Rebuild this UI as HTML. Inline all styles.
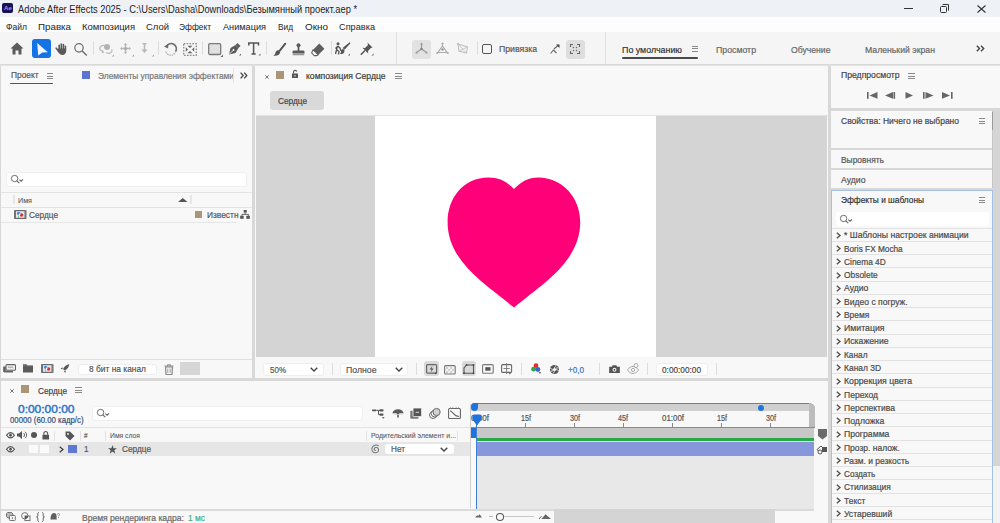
<!DOCTYPE html><html><head><meta charset="utf-8">
<style>
*{margin:0;padding:0;box-sizing:border-box}
html,body{width:1000px;height:523px;overflow:hidden;background:#d8d8d8;font-family:"Liberation Sans",sans-serif;color:#4a4a4a}
.a{position:absolute}
.t,.f{position:absolute;white-space:nowrap;line-height:1;transform-origin:0 0;-webkit-text-stroke-width:0.2px}
svg{position:absolute;overflow:visible}
.sep{position:absolute;width:1px;background:#dedede}
.hm{position:absolute;width:7px;height:6px;border-top:1px solid #8a8a8a;border-bottom:1px solid #8a8a8a}
.hm:after{content:"";position:absolute;left:0;right:0;top:1.5px;height:1px;background:#8a8a8a}
.dd{position:absolute;background:#fff;border-radius:3px}
.rowsep{position:absolute;height:1px;background:#e2e2e2}
</style></head><body>
<!-- title bar -->
<div class="a" style="left:0;top:0;width:1000px;height:17px;background:#eef2f7"></div>
<div class="a" style="left:2px;top:3px;width:10.5px;height:10px;background:#1c1150;border-radius:2px"></div>
<div class="t" style="left:4px;top:5px;font-size:6.2px;color:#9d92ff;font-weight:bold;-webkit-text-stroke-width:0">Ae</div>
<div class="f" style="left: 18px; top: 3.5px; font-size: 10.5px; color: rgb(30, 30, 30); width: 381.9px; -webkit-text-stroke-width: 0px; transform: scaleX(0.888);">Adobe After Effects 2025 - C:\Users\Dasha\Downloads\Безымянный проект.aep *</div>
<div class="a" style="left:904px;top:8px;width:9px;height:1px;background:#333"></div>
<div class="a" style="left:940px;top:6px;width:7px;height:7px;border:1.2px solid #333;border-radius:1.5px"></div>
<div class="a" style="left:942px;top:4px;width:7px;height:7px;border-top:1.2px solid #333;border-right:1.2px solid #333;border-radius:1.5px"></div>
<svg style="left:977px;top:5px" width="9" height="8"><path d="M0.5 0.5L8.5 7.5M8.5 0.5L0.5 7.5" stroke="#333" stroke-width="1.1"></path></svg>
<!-- menu bar -->
<div class="a" style="left:0;top:17px;width:1000px;height:15px;background:#fdfdfd"></div>
<div class="f" style="left: 6px; top: 21.5px; font-size: 9.5px; color: rgb(38, 38, 38); -webkit-text-stroke-width: 0px; width: 23.4px; transform: scaleX(0.899);">Файл</div>
<div class="f" style="left: 38px; top: 21.5px; font-size: 9.5px; color: rgb(38, 38, 38); -webkit-text-stroke-width: 0px; width: 32.1px; transform: scaleX(1.028);">Правка</div>
<div class="f" style="left: 82px; top: 21.5px; font-size: 9.5px; color: rgb(38, 38, 38); -webkit-text-stroke-width: 0px; width: 53.2px; transform: scaleX(0.996);">Композиция</div>
<div class="f" style="left: 146px; top: 21.5px; font-size: 9.5px; color: rgb(38, 38, 38); -webkit-text-stroke-width: 0px; width: 23.1px; transform: scaleX(0.995);">Слой</div>
<div class="f" style="left: 179px; top: 21.5px; font-size: 9.5px; color: rgb(38, 38, 38); -webkit-text-stroke-width: 0px; width: 36.4px; transform: scaleX(0.88);">Эффект</div>
<div class="f" style="left: 223px; top: 21.5px; font-size: 9.5px; color: rgb(38, 38, 38); -webkit-text-stroke-width: 0px; width: 44.6px; transform: scaleX(0.964);">Анимация</div>
<div class="f" style="left: 278px; top: 21.5px; font-size: 9.5px; color: rgb(38, 38, 38); -webkit-text-stroke-width: 0px; width: 17.2px; transform: scaleX(0.873);">Вид</div>
<div class="f" style="left: 305px; top: 21.5px; font-size: 9.5px; color: rgb(38, 38, 38); -webkit-text-stroke-width: 0px; width: 22.1px; transform: scaleX(1.042);">Окно</div>
<div class="f" style="left: 339px; top: 21.5px; font-size: 9.5px; color: rgb(38, 38, 38); -webkit-text-stroke-width: 0px; width: 37.3px; transform: scaleX(0.966);">Справка</div>
<!-- toolbar -->
<div class="a" style="left:0;top:32px;width:1000px;height:32px;background:#f5f5f5"></div>
<div class="a" style="left:0;top:64px;width:1000px;height:1px;background:#d9d9d9"></div>
<!-- TOOLS -->
<!-- home -->
<svg style="left:10px;top:42px" width="14" height="13" viewBox="0 0 14 13"><path d="M7 0.5L0.5 6.5H2.5V12.5H5.5V8.5H8.5V12.5H11.5V6.5H13.5Z" fill="#5c5c5c"></path></svg>
<!-- select -->
<div class="a" style="left:32px;top:39.3px;width:19px;height:18.7px;background:#1473e6;border-radius:3px"></div>
<svg style="left:37px;top:42.8px" width="11" height="13" viewBox="0 0 11 13"><path d="M0.2 0L10.8 9.3L5.3 9.4L1.2 12.6Z" fill="#eef6ff"></path></svg>
<!-- hand -->
<svg style="left:55px;top:43px" width="13" height="12" viewBox="0 0 13 12"><g stroke="#5a5a5a" stroke-linecap="round" fill="none"><path d="M4.2 6.5V2.2" stroke-width="1.6"></path><path d="M6.3 6V1" stroke-width="1.6"></path><path d="M8.4 6V1.6" stroke-width="1.6"></path><path d="M10.4 6.5V3.2" stroke-width="1.5"></path><path d="M1.2 5.2L3.5 8" stroke-width="1.6"></path></g><path d="M3.3 5.5H11.2V8C11.2 10.3 9.6 12 7.4 12C5.6 12 4.6 11 3.4 9.5L2.4 8Z" fill="#5a5a5a"></path></svg>
<!-- zoom -->
<svg style="left:74px;top:42.5px" width="14" height="13" viewBox="0 0 14 13"><circle cx="5" cy="4.8" r="4.2" fill="none" stroke="#707070" stroke-width="1.25"></circle><path d="M8 7.8L12.8 12.5" stroke="#707070" stroke-width="1.5"></path></svg>
<div class="sep" style="left:93px;top:41px;height:14px"></div>
<!-- rotobrush gray -->
<svg style="left:99px;top:43px" width="16" height="14" viewBox="0 0 16 14"><path d="M5.5 2.5C3 2.2 0.8 3.5 0.8 5.5C0.8 7.3 2.6 8.3 4.5 8.2M7 9.5C8 10.3 10 10.5 11.5 9.8C13 9 13.5 7.5 12.5 6.5" fill="none" stroke="#bdbdbd" stroke-width="1.3"></path><circle cx="8" cy="4" r="3" fill="#b3b3b3"></circle><path d="M3 7.5L2.8 10.2L5.5 9.2Z" fill="#b5b5b5"></path><path d="M13 13.5L15 13.5L15 11.5Z" fill="#9a9a9a"></path></svg>
<!-- puppet + -->
<svg style="left:120px;top:43px" width="15" height="14" viewBox="0 0 15 14"><path d="M5.5 1.5V9.5M1.5 5.5H9.5" stroke="#b8b8b8" stroke-width="1.5"></path><path d="M5.5 0L7.3 2H3.7ZM5.5 11L7.3 9H3.7ZM0 5.5L2 3.7V7.3ZM11 5.5L9 3.7V7.3Z" fill="#b8b8b8"></path><circle cx="5.5" cy="5.5" r="1.6" fill="#aaa"></circle><path d="M12 13.5L14 13.5L14 11.5Z" fill="#9a9a9a"></path></svg>
<!-- pin arrow -->
<svg style="left:141px;top:43px" width="14" height="14" viewBox="0 0 14 14"><path d="M1.5 0.8H5.5M3.5 0.8V7" stroke="#b8b8b8" stroke-width="1.5"></path><path d="M0.3 6.5H6.7L3.5 10Z" fill="#b8b8b8"></path><path d="M11 13.5L13 13.5L13 11.5Z" fill="#9a9a9a"></path></svg>
<div class="sep" style="left:158px;top:41px;height:14px"></div>
<!-- rotate -->
<svg style="left:164px;top:42.5px" width="13" height="13" viewBox="0 0 13 13"><path d="M2.6 3.3A5.2 5.2 0 1 1 11.6 8.5" fill="none" stroke="#6e6e6e" stroke-width="1.5"></path><path d="M11.6 8.5A5.2 5.2 0 0 1 1.5 8" fill="none" stroke="#a5a5a5" stroke-width="1.4" stroke-dasharray="1.1 1.1"></path><path d="M0 3.4L4.4 0.9L4.1 5.4Z" fill="#6a6a6a"></path></svg>
<!-- pan behind -->
<svg style="left:183px;top:42.5px" width="14" height="13" viewBox="0 0 14 13"><rect x="0.7" y="0.7" width="12.6" height="11.6" fill="none" stroke="#8a8a8a" stroke-width="1.3" stroke-dasharray="1.6 1.3"></rect><path d="M4.5 2.8H9.5L7 5ZM4.5 10.2H9.5L7 8ZM2.8 4.3V8.7L5 6.5ZM11.2 4.3V8.7L9 6.5Z" fill="#666"></path></svg>
<div class="sep" style="left:202px;top:41px;height:14px"></div>
<!-- rect -->
<svg style="left:208px;top:43px" width="16" height="15" viewBox="0 0 16 15"><rect x="0.7" y="0.7" width="12" height="10.8" rx="1.2" fill="#e0e0e0" stroke="#7a7a7a" stroke-width="1.3"></rect><path d="M12.5 14L15 14L15 11.5Z" fill="#666"></path></svg>
<!-- pen -->
<svg style="left:228px;top:42px" width="14" height="14" viewBox="0 0 14 14"><path d="M1 12.5L2.5 6L7.5 3L10.5 6L7.5 11Z" fill="#5a5a5a"></path><path d="M7.5 3L9.5 1L12.5 4L10.5 6" fill="#5a5a5a"></path><path d="M1 12.5L5 8.5" stroke="#f5f5f5" stroke-width="0.9"></path><circle cx="5.5" cy="8" r="1" fill="#f5f5f5"></circle><path d="M11 13.5L13 13.5L13 11.5Z" fill="#666"></path></svg>
<!-- T -->
<svg style="left:248px;top:42px" width="13" height="14" viewBox="0 0 13 14"><path d="M0.8 3.5V1H10.5V3.5M5.6 1V12M3.5 12H7.7" fill="none" stroke="#555" stroke-width="1.5"></path><path d="M10.5 13.5L12.5 13.5L12.5 11.5Z" fill="#666"></path></svg>
<div class="sep" style="left:266px;top:41px;height:14px"></div>
<!-- brush -->
<svg style="left:272.5px;top:42.5px" width="13" height="13" viewBox="0 0 13 13"><path d="M12.3 0.7L6.8 7.6" stroke="#555" stroke-width="2" stroke-linecap="round"></path><path d="M5.5 7C3.3 7.2 2.5 8.8 2.3 10.2C2.1 11.5 1.2 12.2 0.3 12.6C3 13.2 6.8 12.5 7.2 9Z" fill="#555"></path></svg>
<!-- stamp -->
<svg style="left:291.5px;top:42.5px" width="13" height="13" viewBox="0 0 13 13"><circle cx="6.5" cy="2.3" r="2" fill="#5a5a5a"></circle><path d="M6.5 3.5V8" stroke="#5a5a5a" stroke-width="1.8"></path><path d="M0.5 8.8Q0.5 7.6 2 7.6H11Q12.5 7.6 12.5 8.8V10.5H0.5Z" fill="#5a5a5a"></path><rect x="0.8" y="10.5" width="11.4" height="1.8" fill="#9a9a9a"></rect></svg>
<!-- eraser -->
<svg style="left:311px;top:42.5px" width="14" height="13" viewBox="0 0 14 13"><path d="M8.3 0.6L13.4 5.7L7.2 11.9L2.1 6.8Z" fill="#5e5e5e"></path><path d="M4.2 8.9L7.2 11.9L5.6 12.6H3.3L0.8 10.2L0.9 9.2L2.1 6.8Z" fill="#fff" stroke="#5e5e5e" stroke-width="1.1" stroke-linejoin="round"></path></svg>
<div class="sep" style="left:331px;top:41px;height:14px"></div>
<!-- roto brush -->
<svg style="left:335px;top:42px" width="16" height="14" viewBox="0 0 16 14"><circle cx="3" cy="1.8" r="1.5" fill="#555"></circle><path d="M2.5 4L1.5 8L0.5 12M2.5 4L5 6L6 9M2 8L4 9.5L3.5 12.5M2.5 4.5L0.5 6.5" fill="none" stroke="#555" stroke-width="1.3"></path><path d="M15 0.8L9.5 7L8.5 6Z" fill="#555" stroke="#555" stroke-width="1.2"></path><path d="M8.2 7C6.5 7 6 8.5 6 10C6 11.3 5 11.7 4.5 12C7 12.5 9.5 11.5 9.5 8.5Z" fill="#555"></path><path d="M13 13.5L15 13.5L15 11.5Z" fill="#666"></path></svg>
<!-- pin -->
<svg style="left:360px;top:42px" width="14" height="14" viewBox="0 0 14 14"><path d="M7.5 0.5L12.5 5.5L10.8 6L8 9L8.2 11.5L2.5 5.8L5 6L8 3Z" fill="#555"></path><path d="M5 8.5L0.8 12.7" stroke="#555" stroke-width="1.5"></path><path d="M11.5 13.5L13.5 13.5L13.5 11.5Z" fill="#666"></path></svg>
<div class="sep" style="left:396px;top:32px;height:32px;background:#e0e0e0"></div>
<!-- axis btns -->
<div class="a" style="left:412px;top:39.5px;width:19px;height:19px;background:#e2e2e2;border-radius:3px"></div>
<svg style="left:415px;top:42px" width="13" height="13" viewBox="0 0 13 13"><path d="M6.5 7V1.5M6.5 7L1.5 10.5M6.5 7L11.5 10.5" stroke="#9a9a9a" stroke-width="1.2" fill="none"></path><path d="M5 2.5L6.5 0.5L8 2.5Z" fill="#9a9a9a"></path><circle cx="6.5" cy="7" r="1.3" fill="#888"></circle><circle cx="1.5" cy="10.8" r="1" fill="#999"></circle><circle cx="11.5" cy="10.8" r="1" fill="#999"></circle></svg>
<svg style="left:436px;top:42px" width="13" height="13" viewBox="0 0 13 13"><path d="M6.5 3.5V1M6.5 4L2 10.5H11Z" stroke="#aaa" stroke-width="1.2" fill="none"></path><path d="M5 2L6.5 0.2L8 2Z" fill="#aaa"></path><circle cx="6.5" cy="7.5" r="1.2" fill="#999"></circle><circle cx="1.2" cy="11" r="1" fill="#aaa"></circle><circle cx="11.8" cy="11" r="1" fill="#aaa"></circle></svg>
<svg style="left:457px;top:42px" width="12" height="13" viewBox="0 0 12 13"><path d="M1 2L10.5 5L9.5 11L2 9Z" stroke="#c0c0c0" stroke-width="1.1" fill="none"></path><path d="M1 2L9.5 11M10.5 5L2 9" stroke="#c8c8c8" stroke-width="1" fill="none"></path><circle cx="1" cy="2" r="1" fill="#bbb"></circle></svg>
<div class="sep" style="left:477px;top:41px;height:14px"></div>
<div class="a" style="left:481.5px;top:43.5px;width:10.5px;height:10.5px;border:1.6px solid #555;border-radius:2px"></div>
<div class="f" style="left: 499px; top: 44px; font-size: 9.5px; color: rgb(85, 85, 85); width: 41.5px; transform: scaleX(0.915);">Привязка</div>
<svg style="left:550px;top:44px" width="10" height="10" viewBox="0 0 10 10"><path d="M0.5 9.5L3.5 6L6.5 9M4 5L8.5 1" stroke="#666" stroke-width="1.1" fill="none"></path><path d="M6 0.5H9.5V4Z" fill="#444"></path></svg>
<div class="a" style="left:565.5px;top:39.5px;width:19px;height:19px;background:#dedede;border-radius:3px"></div>
<svg style="left:570px;top:44px" width="10" height="10" viewBox="0 0 10 10"><path d="M0.5 3V0.5H3M7 0.5H9.5V3M9.5 7V9.5H7M3 9.5H0.5V7" stroke="#666" stroke-width="1.1" fill="none"></path><circle cx="3.5" cy="3.5" r="0.7" fill="#666"></circle><circle cx="6.5" cy="3.5" r="0.7" fill="#666"></circle><circle cx="3.5" cy="6.5" r="0.7" fill="#666"></circle><circle cx="6.5" cy="6.5" r="0.7" fill="#666"></circle></svg>
<div class="sep" style="left:605px;top:32px;height:32px;background:#e0e0e0"></div>
<div class="f" style="left: 622px; top: 44.8px; font-size: 9.5px; color: rgb(51, 51, 51); width: 64.3px; transform: scaleX(0.934);">По умолчанию</div>
<div class="hm" style="left:692px;top:45.5px;width:6px"></div>
<div class="a" style="left:622px;top:57px;width:76px;height:2px;background:#4a4a4a;border-radius:1px"></div>
<div class="f" style="left: 716px; top: 44.8px; font-size: 9.5px; color: rgb(102, 102, 102); width: 43.4px; transform: scaleX(0.922);">Просмотр</div>
<div class="f" style="left: 790.5px; top: 44.8px; font-size: 9.5px; color: rgb(102, 102, 102); width: 43.5px; transform: scaleX(0.909);">Обучение</div>
<div class="f" style="left: 865px; top: 44.8px; font-size: 9.5px; color: rgb(102, 102, 102); width: 76.6px; transform: scaleX(0.914);">Маленький экран</div>
<svg style="left:976px;top:45px" width="9" height="7" viewBox="0 0 9 7"><path d="M0.8 0.8L3.5 3.5L0.8 6.2M5 0.8L7.7 3.5L5 6.2" stroke="#444" stroke-width="1.4" fill="none"></path></svg>

<!-- PANELS -->
<!-- ===== PROJECT PANEL ===== -->
<div class="a" style="left:1px;top:65px;width:251px;height:313px;background:#f8f8f8"></div>
<div class="f" style="left: 11px; top: 70.4px; font-size: 9.5px; color: rgb(85, 85, 85); width: 31.3px; transform: scaleX(0.879);">Проект</div>
<div class="hm" style="left:47px;top:73px;width:6px"></div>
<div class="a" style="left:10px;top:83px;width:43px;height:1.4px;background:#555;border-radius:1px"></div>
<div class="a" style="left:82px;top:71px;width:8px;height:7.5px;background:#5b75d3"></div>
<div class="f" style="left: 97.5px; top: 71px; font-size: 9.5px; color: rgb(119, 119, 119); width: 154.1px; transform: scaleX(0.883);">Элементы управления эффектами</div>
<div class="a" style="left:233px;top:68px;width:1px;height:15px;background:#e6e6e6"></div>
<svg style="left:240px;top:72.3px" width="8" height="7" viewBox="0 0 8 7"><path d="M0.6 0.6L3.2 3.5L0.6 6.4M4.2 0.6L6.8 3.5L4.2 6.4" stroke="#444" stroke-width="1.3" fill="none"></path></svg>
<!-- search -->
<div class="dd" style="left:6px;top:171.5px;width:241px;height:15px;border:1px solid #efefef"></div>
<svg style="left:11px;top:175px" width="13" height="9" viewBox="0 0 13 9"><circle cx="3.6" cy="3.5" r="3.2" fill="none" stroke="#666" stroke-width="0.95"></circle><path d="M5.9 5.9L8.3 8.2" stroke="#666" stroke-width="1.1"></path><path d="M8.3 4.6L10.1 6.2L12 4.3" stroke="#666" stroke-width="1.1" fill="none"></path></svg>
<div class="a" style="left:1px;top:191.5px;width:251px;height:1px;background:#e3e3e3"></div>
<div class="a" style="left:13px;top:195px;width:1.5px;height:9px;background:#e6e6e6"></div>
<div class="f" style="left: 18px; top: 197.3px; font-size: 8px; color: rgb(90, 90, 90); -webkit-text-stroke-width: 0.1px; width: 15.6px; transform: scaleX(0.898);">Имя</div>
<svg style="left:177.5px;top:197.9px" width="9.5" height="4" viewBox="0 0 9.5 4"><path d="M0 4L4.75 0L9.5 4Z" fill="#555"></path></svg>
<div class="a" style="left:190px;top:195px;width:1.5px;height:9px;background:#e6e6e6"></div>
<div class="a" style="left:1px;top:206.5px;width:251px;height:1px;background:#e3e3e3"></div>
<!-- comp icon -->
<svg style="left:14px;top:209.5px" width="12.5" height="9" viewBox="0 0 12.5 9"><rect x="0" y="0" width="12.5" height="9" rx="0.8" fill="#6a6a6a"></rect><path d="M1 0.4V8.6M11.5 0.4V8.6" stroke="#aaa" stroke-width="0.6" stroke-dasharray="0.8 0.9"></path><rect x="2" y="1.2" width="8.5" height="6.6" fill="#e6e6e6"></rect><circle cx="4.6" cy="3.3" r="1.6" fill="#3f86d8"></circle><circle cx="7.6" cy="5" r="1.7" fill="#d8303a"></circle><circle cx="5.6" cy="4.4" r="0.8" fill="#fff"></circle><rect x="4.2" y="5.6" width="0.8" height="2" fill="#5cbf6a"></rect></svg>
<div class="f" style="left: 29px; top: 210.3px; font-size: 9.5px; color: rgb(85, 85, 85); width: 33.4px; transform: scaleX(0.869);">Сердце</div>
<div class="a" style="left:195px;top:211px;width:7px;height:7px;background:#a89676"></div>
<div class="f" style="left: 207px; top: 210.3px; font-size: 9.5px; color: rgb(85, 85, 85); width: 35.8px; transform: scaleX(0.881);">Известн</div>
<svg style="left:240px;top:209.8px" width="10" height="8.8" viewBox="0 0 11 10"><rect x="4" y="0" width="3.5" height="3" fill="#555"></rect><path d="M5.7 3V5M2 5H9.5M2 5V6.5M9.5 5V6.5" stroke="#555" stroke-width="1"></path><rect x="0" y="6.5" width="4" height="3.5" fill="#555"></rect><rect x="7" y="6.5" width="4" height="3.5" fill="#555"></rect></svg>
<div class="a" style="left:1px;top:221.5px;width:236px;height:1px;background:#e6e6e6"></div>
<!-- bottom toolbar -->
<div class="a" style="left:1px;top:359px;width:251px;height:1px;background:#e0e0e0"></div>
<svg style="left:2.5px;top:364px" width="13" height="8.5" viewBox="0 0 13 8.5"><rect x="3" y="0.6" width="9.5" height="5.6" rx="1" fill="#eee" stroke="#666" stroke-width="1.1"></rect><path d="M5 3.2H10" stroke="#888" stroke-width="0.8"></path><rect x="0.2" y="2.5" width="2.5" height="5.5" fill="#5e5e5e"></rect><rect x="1" y="6.8" width="9" height="1.7" fill="#666"></rect></svg>
<svg style="left:23px;top:364px" width="10" height="8.5" viewBox="0 0 10 8.5"><path d="M0 0.3H3.5L4.3 1.4H10V8.5H0Z" fill="#5a5a5a"></path><path d="M0 1.8H10" stroke="#888" stroke-width="0.5"></path></svg>
<svg style="left:40.5px;top:363.8px" width="12.5" height="9" viewBox="0 0 12.5 9"><rect x="0" y="0" width="12.5" height="9" rx="0.8" fill="#6a6a6a"></rect><path d="M1 0.4V8.6M11.5 0.4V8.6" stroke="#aaa" stroke-width="0.6" stroke-dasharray="0.8 0.9"></path><rect x="2" y="1.2" width="8.5" height="6.6" fill="#e6e6e6"></rect><circle cx="4.6" cy="3.3" r="1.6" fill="#3f86d8"></circle><circle cx="7.6" cy="5" r="1.7" fill="#d8303a"></circle><circle cx="5.6" cy="4.4" r="0.8" fill="#fff"></circle><rect x="4.2" y="5.6" width="0.8" height="2" fill="#5cbf6a"></rect></svg>
<svg style="left:60px;top:363.5px" width="9.5" height="9.5" viewBox="0 0 10 10"><path d="M9.8 0.2C7 0.5 4.5 2.3 3.2 5.3L4.7 6.8C7.7 5.5 9.5 3 9.8 0.2Z" fill="#5a5a5a"></path><path d="M3.2 3.6L0.6 4.6L2.3 5.8ZM6.4 6.8L5.4 9.4L4.2 7.7Z" fill="#5a5a5a"></path></svg>
<div class="dd" style="left:78px;top:364px;width:79px;height:11px;border:1px solid #eee"></div>
<div class="f" style="left: 88.5px; top: 365px; font-size: 9px; color: rgb(85, 85, 85); width: 61.2px; transform: scaleX(0.932);">8 бит на канал</div>
<svg style="left:164px;top:363.5px" width="10" height="11" viewBox="0 0 10 11"><path d="M0.5 2H9.5M3.5 2V0.8H6.5V2" stroke="#888" stroke-width="1" fill="none"></path><path d="M1.5 3H8.5L8 10.5H2Z" fill="none" stroke="#888" stroke-width="1.2"></path><path d="M3.8 4.5V9M6.2 4.5V9" stroke="#888" stroke-width="0.8"></path></svg>
<div class="a" style="left:180px;top:362px;width:19.5px;height:12.5px;background:#d6d6d6"></div>

<!-- ===== COMP PANEL ===== -->
<div class="a" style="left:255px;top:65px;width:573px;height:313px;background:#f8f8f8"></div>
<svg style="left:264.5px;top:74.5px" width="4" height="4" viewBox="0 0 4 4"><path d="M0.3 0.3L3.7 3.7M3.7 0.3L0.3 3.7" stroke="#666" stroke-width="0.9"></path></svg>
<div class="a" style="left:276px;top:71px;width:8px;height:7.5px;background:#a89676"></div>
<svg style="left:292px;top:70px" width="6" height="8" viewBox="0 0 6 8"><path d="M1.5 3.5V2A1.7 1.7 0 0 1 4.8 1.5" stroke="#555" stroke-width="1.1" fill="none"></path><rect x="0" y="3.5" width="6" height="4.5" fill="#555"></rect><rect x="2.5" y="5" width="1" height="1.5" fill="#f8f8f8"></rect></svg>
<div class="f" style="left: 306px; top: 71.3px; font-size: 9.5px; color: rgb(58, 58, 58); width: 88px; transform: scaleX(0.904);">композиция Сердце</div>
<div class="hm" style="left:395px;top:73px;width:6.5px"></div>
<div class="a" style="left:270px;top:91px;width:54px;height:19px;background:#d9d9d9;border-radius:3px"></div>
<div class="f" style="left: 277.5px; top: 95.6px; font-size: 9.5px; color: rgb(68, 68, 68); width: 33.4px; transform: scaleX(0.869);">Сердце</div>
<div class="a" style="left:256px;top:115px;width:572px;height:1px;background:#e4e4e4"></div>
<!-- viewer -->
<div class="a" style="left:256px;top:116px;width:571px;height:241px;background:#d4d4d4"></div>
<div class="a" style="left:375px;top:116px;width:281px;height:241px;background:#fff"></div>
<svg style="left:0;top:0" width="1000" height="523"><path d="M514 189C507 182 500 177.6 488.5 177.6C463.5 177.6 447.6 198 447.6 222C447.6 262 486 284 514 307.6C542 284 580.2 262 580.2 222C580.2 197 561.5 177.6 538.5 177.6C528 177.6 521 182 514 189Z" fill="#ff0078"></path></svg>
<!-- viewer toolbar -->
<div class="dd" style="left:263px;top:362.5px;width:61px;height:13.5px;border:1px solid #efefef"></div>
<div class="f" style="left: 270px; top: 365px; font-size: 9.5px; color: rgb(85, 85, 85); width: 19px; transform: scaleX(0.841);">50%</div>
<svg style="left:310px;top:366.5px" width="8" height="5" viewBox="0 0 8 5"><path d="M0.7 0.7L4 4L7.3 0.7" stroke="#444" stroke-width="1.4" fill="none"></path></svg>
<div class="sep" style="left:332px;top:363px;height:12px"></div>
<div class="dd" style="left:339.5px;top:362.5px;width:68.5px;height:13.5px;border:1px solid #efefef"></div>
<div class="f" style="left: 345.5px; top: 365px; font-size: 9.5px; color: rgb(85, 85, 85); width: 33.3px; transform: scaleX(0.917);">Полное</div>
<svg style="left:394.5px;top:366.5px" width="8" height="5" viewBox="0 0 8 5"><path d="M0.7 0.7L4 4L7.3 0.7" stroke="#444" stroke-width="1.4" fill="none"></path></svg>
<div class="sep" style="left:416px;top:363px;height:12px"></div>
<div class="a" style="left:424px;top:361px;width:14.5px;height:14.5px;background:#dadada;border-radius:3px"></div>
<svg style="left:425.5px;top:364px" width="12" height="11" viewBox="0 0 12 11"><rect x="0.6" y="0.6" width="10" height="8.6" rx="1" fill="none" stroke="#666" stroke-width="1.2"></rect><path d="M6.5 1.8L3.6 5.6H5.6L4.6 8.4L7.6 4.6H5.6Z" fill="#555"></path><path d="M8.2 8.8H11.2L9.7 10.3Z" fill="#444"></path></svg>
<svg style="left:444px;top:364.5px" width="12" height="10" viewBox="0 0 12 10"><rect x="0.6" y="0.6" width="10.6" height="8.4" rx="1" fill="#f2f2f2" stroke="#777" stroke-width="1.1"></rect><path d="M2 2H4V4H2ZM6 2H8V4H6ZM4 4H6V6H4ZM8 4H10V6H8ZM2 6H4V8H2ZM6 6H8V8H6Z" fill="#d0d0d0"></path></svg>
<div class="a" style="left:461.5px;top:361px;width:14px;height:14.5px;background:#dadada;border-radius:3px"></div>
<svg style="left:463px;top:364px" width="12" height="10" viewBox="0 0 12 10"><path d="M3.5 1H10.5V9.2H1V4Z" fill="none" stroke="#555" stroke-width="1.1"></path><circle cx="3.5" cy="1" r="0.9" fill="#444"></circle><circle cx="10.5" cy="1" r="0.9" fill="#444"></circle><circle cx="1" cy="9.2" r="0.9" fill="#444"></circle><circle cx="10.5" cy="9.2" r="0.9" fill="#444"></circle></svg>
<svg style="left:481.5px;top:364px" width="12" height="10" viewBox="0 0 12 10"><rect x="0.6" y="0.6" width="10.6" height="8.6" rx="1" fill="none" stroke="#777" stroke-width="1.1"></rect><rect x="3.3" y="3.2" width="5.2" height="3.5" fill="#555"></rect></svg>
<svg style="left:500.5px;top:362.5px" width="12" height="13" viewBox="0 0 12 13"><rect x="0.6" y="1.6" width="10" height="7.8" rx="1" fill="none" stroke="#666" stroke-width="1.1"></rect><path d="M5.6 0V11M2.5 5.5H8.7" stroke="#777" stroke-width="0.9"></path><path d="M7.5 10.2H10L8.75 11.6Z" fill="#444"></path></svg>
<div class="sep" style="left:521px;top:363px;height:12px"></div>
<svg style="left:530.5px;top:363px" width="11" height="12" viewBox="0 0 11 12"><circle cx="5" cy="2.7" r="2.4" fill="#e0312d"></circle><circle cx="2.6" cy="6.2" r="2.4" fill="#2da84a"></circle><circle cx="6.9" cy="6.5" r="2.4" fill="#3a62d8"></circle><path d="M7.5 9.3H10.3L8.9 10.8Z" fill="#444"></path></svg>
<svg style="left:550px;top:364.5px" width="9" height="9" viewBox="0 0 10 10"><circle cx="5" cy="5" r="5" fill="#555"></circle><circle cx="5" cy="5" r="1.8" fill="#f8f8f8"></circle><path d="M5 3.2L6.5 0.5M6.8 5L9.6 6.2M5 6.8L3.5 9.5M3.2 5L0.4 3.8M6.3 3.7L9.3 3M3.7 6.3L0.7 7" stroke="#f8f8f8" stroke-width="0.9"></path></svg>
<div class="f" style="left: 567.5px; top: 365px; font-size: 9.5px; color: rgb(45, 115, 201); width: 18.8px; transform: scaleX(0.853);">+0,0</div>
<div class="sep" style="left:599px;top:363px;height:12px"></div>
<svg style="left:608.5px;top:365px" width="11" height="8" viewBox="0 0 12 9"><path d="M0 2H3L4 0.3H8L9 2H12V9H0Z" fill="#555"></path><circle cx="6" cy="5.3" r="2.2" fill="#f8f8f8"></circle><circle cx="6" cy="5.3" r="1.1" fill="#555"></circle></svg>
<svg style="left:626.5px;top:363px" width="12" height="11" viewBox="0 0 12 11"><path d="M0.5 7C2 4.5 4 3.5 6 3.5C8 3.5 10 4.5 11.5 7C10 9.5 8 10.5 6 10.5C4 10.5 2 9.5 0.5 7Z" fill="none" stroke="#aaa" stroke-width="1"></path><circle cx="6" cy="7" r="1.6" fill="none" stroke="#aaa" stroke-width="1"></circle><circle cx="9" cy="2.5" r="2" fill="#f8f8f8" stroke="#aaa" stroke-width="1"></circle></svg>
<div class="sep" style="left:647px;top:363px;height:12px"></div>
<div class="dd" style="left:655.5px;top:362.5px;width:52.5px;height:13.5px;border:1px solid #efefef"></div>
<div class="f" style="left: 662px; top: 365px; font-size: 9.5px; color: rgb(68, 68, 68); width: 44.9px; transform: scaleX(0.868);">0:00:00:00</div>
<div class="sep" style="left:716px;top:363px;height:12px"></div>

<!-- PANELS2 -->
<!-- ===== TIMELINE ===== -->
<div class="a" style="left:1px;top:381px;width:827px;height:142px;background:#f8f8f8"></div>
<svg style="left:10px;top:388.5px" width="4" height="4" viewBox="0 0 4 4"><path d="M0.3 0.3L3.7 3.7M3.7 0.3L0.3 3.7" stroke="#666" stroke-width="0.9"></path></svg>
<div class="a" style="left:21px;top:384.5px;width:8px;height:8px;background:#a89676"></div>
<div class="f" style="left: 38px; top: 385.5px; font-size: 9.5px; color: rgb(68, 68, 68); width: 33.4px; transform: scaleX(0.869);">Сердце</div>
<div class="hm" style="left:75px;top:387px;width:6.5px"></div>
<div class="f" style="left: 18px; top: 404px; font-size: 10.8px; color: rgb(47, 116, 200); width: 51px; -webkit-text-stroke: 0.45px rgb(47, 116, 200); transform: scaleX(1.107);">0:00:00:00</div>
<div class="f" style="left: 9.5px; top: 415.9px; font-size: 9px; color: rgb(46, 77, 124); width: 85px; -webkit-text-stroke: 0.2px rgb(46, 77, 124); transform: scaleX(0.865);">00000 (60.00 кадр/с)</div>
<div class="dd" style="left:92px;top:405.5px;width:271px;height:15px;border:1px solid #efefef"></div>
<svg style="left:97px;top:409px" width="13" height="9" viewBox="0 0 13 9"><circle cx="3.6" cy="3.5" r="3.2" fill="none" stroke="#666" stroke-width="0.95"></circle><path d="M5.9 5.9L8.3 8.2" stroke="#666" stroke-width="1.1"></path><path d="M8.3 4.6L10.1 6.2L12 4.3" stroke="#666" stroke-width="1.1" fill="none"></path></svg>
<!-- timeline icons -->
<svg style="left:372px;top:409px" width="13" height="10" viewBox="0 0 13 10"><rect x="0" y="0.6" width="4.5" height="1.6" rx="0.8" fill="#555"></rect><path d="M4.5 1.4H6.5V5.6H8M6.5 1.4H8" stroke="#555" stroke-width="1" fill="none"></path><rect x="7.5" y="0.2" width="4" height="2.4" rx="0.8" fill="#555"></rect><rect x="7.5" y="4.4" width="4" height="2.4" rx="0.8" fill="#555"></rect><path d="M9.8 8.2H12.6L11.2 9.8Z" fill="#444"></path></svg>
<svg style="left:391.5px;top:408.8px" width="12" height="9" viewBox="0 0 12 9"><path d="M0.3 4.2C1 1.8 3.2 0.3 6 0.3C8.8 0.3 11 1.8 11.7 4.2Z" fill="#5a5a5a"></path><path d="M6 4V8.5" stroke="#5a5a5a" stroke-width="1.6"></path><circle cx="6" cy="4.6" r="1.3" fill="#5a5a5a"></circle><path d="M1.5 5.5H10.5" stroke="#d8d8d8" stroke-width="0.8"></path></svg>
<svg style="left:410px;top:408px" width="12" height="11" viewBox="0 0 12 11"><rect x="0.3" y="2.8" width="8.2" height="8" rx="0.8" fill="#777"></rect><rect x="3" y="0" width="8.6" height="8.6" rx="0.8" fill="#555" stroke="#f8f8f8" stroke-width="0.8"></rect><rect x="5.6" y="3.8" width="3.4" height="1" fill="#ddd"></rect></svg>
<svg style="left:429px;top:408px" width="12" height="11" viewBox="0 0 12 11"><circle cx="4" cy="7" r="3.5" fill="#f8f8f8" stroke="#6a6a6a" stroke-width="1"></circle><circle cx="5.8" cy="5.5" r="3.5" fill="#f8f8f8" stroke="#6a6a6a" stroke-width="1"></circle><circle cx="7.6" cy="4" r="3.6" fill="#d0d0d0" stroke="#6a6a6a" stroke-width="1"></circle></svg>
<svg style="left:447.5px;top:407px" width="13" height="12" viewBox="0 0 13 12"><rect x="0.6" y="1.5" width="11.8" height="10" rx="1" fill="none" stroke="#666" stroke-width="1.1"></rect><path d="M2.5 0.3V2M4.8 0.3V2M8.2 0.3V2M10.5 0.3V2" stroke="#777" stroke-width="0.8"></path><path d="M2 4C5 4 5.5 9.5 11 9.5" stroke="#666" stroke-width="1.1" fill="none"></path></svg>
<div class="a" style="left:1px;top:427px;width:469px;height:1px;background:#e2e2e2"></div>
<!-- header -->
<svg style="left:6px;top:432.0px" width="9" height="6.5" viewBox="0 0 9 6.5"><path d="M0.6 3.25C2 1.1 3 0.6 4.5 0.6C6 0.6 7 1.1 8.4 3.25C7 5.4 6 5.9 4.5 5.9C3 5.9 2 5.4 0.6 3.25Z" fill="#fff" stroke="#505050" stroke-width="1.2"></path><circle cx="4.5" cy="3.25" r="1.4" fill="#505050"></circle></svg>
<svg style="left:17px;top:431px" width="10" height="8" viewBox="0 0 10 8"><path d="M0 2.5H2L5 0V8L2 5.5H0Z" fill="#555"></path><path d="M6.5 2A2.5 2.5 0 0 1 6.5 6M8 0.8A4 4 0 0 1 8 7.2" stroke="#555" stroke-width="0.9" fill="none"></path></svg>
<div class="a" style="left:31px;top:432.3px;width:6px;height:6px;background:#555;border-radius:50%"></div>
<svg style="left:41.5px;top:430.5px" width="7.5" height="8.5" viewBox="0 0 8 9"><path d="M2 4V2.5A2 2 0 0 1 6 2.5V4" stroke="#555" stroke-width="1.2" fill="none"></path><rect x="0.5" y="4" width="7" height="5" fill="#555"></rect></svg>
<div class="a" style="left:54px;top:431px;width:1px;height:10px;background:#e3e3e3"></div>
<svg style="left:65px;top:430.5px" width="10" height="10" viewBox="0 0 10 10"><path d="M0.5 0.5H5L9.5 5L5 9.5L0.5 5Z" fill="#555"></path><circle cx="3" cy="3" r="0.9" fill="#f8f8f8"></circle></svg>
<div class="a" style="left:80px;top:431px;width:1px;height:10px;background:#e3e3e3"></div>
<div class="f" style="left: 84px; top: 432.3px; font-size: 8px; color: rgb(102, 102, 102); width: 4.5px; transform: scaleX(0.786);">#</div>
<div class="a" style="left:105px;top:431px;width:1px;height:10px;background:#e3e3e3"></div>
<div class="f" style="left: 110px; top: 432.2px; font-size: 8px; color: rgb(90, 90, 90); -webkit-text-stroke-width: 0.1px; width: 35.3px; transform: scaleX(0.849);">Имя слоя</div>
<div class="a" style="left:366px;top:431px;width:1px;height:10px;background:#e3e3e3"></div>
<div class="f" style="left: 371px; top: 432.2px; font-size: 8px; color: rgb(90, 90, 90); -webkit-text-stroke-width: 0.1px; width: 98.1px; transform: scaleX(0.867);">Родительский элемент и...</div>
<div class="a" style="left:457px;top:431px;width:1px;height:10px;background:#e3e3e3"></div>
<div class="a" style="left:1px;top:441.5px;width:469px;height:1px;background:#dedede"></div>
<!-- layer row -->
<div class="a" style="left:1px;top:442px;width:469px;height:14px;background:#e6e6e6"></div>
<svg style="left:6px;top:445.7px" width="9" height="6.5" viewBox="0 0 9 6.5"><path d="M0.6 3.25C2 1.1 3 0.6 4.5 0.6C6 0.6 7 1.1 8.4 3.25C7 5.4 6 5.9 4.5 5.9C3 5.9 2 5.4 0.6 3.25Z" fill="#fff" stroke="#505050" stroke-width="1.2"></path><circle cx="4.5" cy="3.25" r="1.4" fill="#505050"></circle></svg>
<div class="a" style="left:29px;top:444.5px;width:8.5px;height:8px;background:#fafafa"></div>
<div class="a" style="left:40px;top:444.5px;width:9px;height:8px;background:#fafafa"></div>
<svg style="left:58.5px;top:445.5px" width="5" height="7" viewBox="0 0 5 7"><path d="M0.7 0.7L4 3.5L0.7 6.3" stroke="#444" stroke-width="1.3" fill="none"></path></svg>
<div class="a" style="left:68px;top:444.5px;width:9px;height:8.5px;background:#5e78d6"></div>
<div class="f" style="left: 84px; top: 443.8px; font-size: 9.5px; color: rgb(85, 85, 85); width: 5.3px; transform: scaleX(0.85);">1</div>
<svg style="left:108px;top:444.5px" width="9" height="9" viewBox="0 0 9 9"><path d="M4.5 0L5.6 3.3H9L6.3 5.3L7.3 8.7L4.5 6.6L1.7 8.7L2.7 5.3L0 3.3H3.4Z" fill="#555"></path></svg>
<div class="f" style="left: 122px; top: 444px; font-size: 9.5px; color: rgb(85, 85, 85); width: 33.4px; transform: scaleX(0.869);">Сердце</div>
<svg style="left:370.5px;top:444.8px" width="10" height="9" viewBox="0 0 10 9"><path d="M4.76 5.40 L4.60 5.44 L4.42 5.45 L4.23 5.43 L4.05 5.37 L3.86 5.27 L3.69 5.14 L3.54 4.97 L3.42 4.76 L3.33 4.53 L3.28 4.28 L3.28 4.01 L3.33 3.73 L3.43 3.46 L3.58 3.20 L3.78 2.96 L4.02 2.75 L4.31 2.59 L4.63 2.47 L4.98 2.40 L5.34 2.40 L5.71 2.46 L6.07 2.59 L6.41 2.78 L6.73 3.04 L7.00 3.35 L7.22 3.71 L7.38 4.12 L7.47 4.56 L7.49 5.01 L7.42 5.48 L7.28 5.93 L7.05 6.37 L6.75 6.76 L6.38 7.11 L5.95 7.40 L5.46 7.61 L4.93 7.74 L4.38 7.78 L3.82 7.73 L3.27 7.57 L2.74 7.33 L2.26 6.99 L1.82 6.57 L1.46 6.07 L1.19 5.51 L1.01 4.90 L0.93 4.25 L0.96 3.60 L1.11 2.95 L1.37 2.32 L1.73 1.73 L2.20 1.21 L2.75 0.77 L3.38 0.42 L4.07 0.18 L4.80 0.05 L5.55 0.05 L6.31 0.18 L7.04 0.44 L7.72 0.82" stroke="#777" stroke-width="1.05" fill="none"></path></svg>
<div class="dd" style="left:385px;top:444px;width:69px;height:10px"></div>
<div class="f" style="left: 391px; top: 444.3px; font-size: 9.5px; color: rgb(85, 85, 85); width: 16.2px; transform: scaleX(0.865);">Нет</div>
<svg style="left:440px;top:446.5px" width="8" height="5" viewBox="0 0 8 5"><path d="M0.7 0.7L4 4L7.3 0.7" stroke="#444" stroke-width="1.4" fill="none"></path></svg>
<!-- timeline graph -->
<div class="a" style="left:470px;top:404px;width:1px;height:104px;background:#d0d0d0"></div>
<div class="a" style="left:471px;top:403px;width:344px;height:8px;background:#d0d0d0;border-top:1.5px solid #7d7d7d;border-radius:4px 6px 0 0"></div>
<div class="a" style="left:809px;top:403px;width:6px;height:24px;background:#bcbcbc;border-top-right-radius:6px"></div>
<div class="a" style="left:471px;top:403px;width:7px;height:8px;background:#1f73dc;border-radius:50% 0 50% 50%"></div>
<div class="a" style="left:758px;top:404.5px;width:5.5px;height:6.5px;background:#1f73dc;border-radius:3px"></div>
<div class="a" style="left:471px;top:411px;width:338px;height:16px;background:#f8f8f8"></div>
<div class="f" style="left: 471px; top: 414px; font-size: 8.5px; color: rgb(85, 85, 85); width: 18.9px; transform: scaleX(0.952);">0:00f</div>
<div class="f" style="left: 520.5px; top: 414px; font-size: 8.5px; color: rgb(85, 85, 85); width: 11.8px; transform: scaleX(0.845);">15f</div>
<div class="f" style="left: 569.5px; top: 414px; font-size: 8.5px; color: rgb(85, 85, 85); width: 11.8px; transform: scaleX(0.845);">30f</div>
<div class="f" style="left: 618px; top: 414px; font-size: 8.5px; color: rgb(85, 85, 85); width: 11.8px; transform: scaleX(0.845);">45f</div>
<div class="f" style="left: 662px; top: 414px; font-size: 8.5px; color: rgb(85, 85, 85); width: 23.6px; transform: scaleX(0.931);">01:00f</div>
<div class="f" style="left: 716.5px; top: 414px; font-size: 8.5px; color: rgb(85, 85, 85); width: 11.8px; transform: scaleX(0.845);">15f</div>
<div class="f" style="left: 765.5px; top: 414px; font-size: 8.5px; color: rgb(85, 85, 85); width: 11.8px; transform: scaleX(0.845);">30f</div>
<div class="a" style="left:525px;top:423px;width:1px;height:3.5px;background:#888"></div>
<div class="a" style="left:574px;top:423px;width:1px;height:3.5px;background:#888"></div>
<div class="a" style="left:623px;top:423px;width:1px;height:3.5px;background:#888"></div>
<div class="a" style="left:672px;top:423px;width:1px;height:3.5px;background:#888"></div>
<div class="a" style="left:721px;top:423px;width:1px;height:3.5px;background:#888"></div>
<div class="a" style="left:770px;top:423px;width:1px;height:3.5px;background:#888"></div>
<div class="a" style="left:471px;top:426.5px;width:344px;height:1px;background:#8a8a8a"></div>
<div class="a" style="left:471px;top:427.5px;width:343px;height:10.5px;background:#c8c8c8"></div>
<div class="a" style="left:471px;top:427.5px;width:6px;height:10.5px;background:#1f73dc"></div>
<div class="a" style="left:476px;top:438px;width:338px;height:3px;background:#2aa84a"></div>
<div class="a" style="left:476px;top:441px;width:338px;height:1px;background:#c6ecd0"></div>
<div class="a" style="left:471px;top:438px;width:5px;height:72px;background:#fafafa"></div>
<div class="a" style="left:477px;top:442px;width:337px;height:13.5px;background:#8797dc"></div>
<div class="a" style="left:477px;top:455.5px;width:337px;height:54.5px;background:#e8e8e8"></div>
<div class="a" style="left:475.5px;top:420px;width:1.5px;height:90px;background:#3d7fd6"></div>
<svg style="left:471.5px;top:414px" width="10" height="12" viewBox="0 0 10 12"><path d="M0.5 2A1.5 1.5 0 0 1 2 0.5H8A1.5 1.5 0 0 1 9.5 2V5.5L5 11.5L0.5 5.5Z" fill="#1f73dc"></path></svg>
<svg style="left:817.5px;top:429px" width="9" height="11" viewBox="0 0 9 11"><path d="M0 0H9V7L4.5 10.5L0 7Z" fill="#6a6a6a"></path></svg>
<svg style="left:816px;top:445px" width="11" height="9" viewBox="0 0 11 9"><path d="M1 4.5L5 1L8 4L4 8Z" fill="none" stroke="#555" stroke-width="1"></path><rect x="6" y="2" width="5" height="5" fill="#555"></rect><circle cx="4" cy="7" r="2" fill="#f8f8f8" stroke="#555" stroke-width="1"></circle></svg>
<!-- bottom bar -->
<div class="a" style="left:1px;top:509.3px;width:813px;height:1.4px;background:#dadada"></div>
<svg style="left:6px;top:512.3px" width="10" height="9" viewBox="0 0 10 9"><path d="M1.5 0.5H5.5L7 2V6H2L0.5 4.5V1.5Z" fill="#bbb" stroke="#666" stroke-width="0.9"></path><rect x="3.5" y="3.5" width="5.8" height="5" rx="0.8" fill="#f8f8f8" stroke="#666" stroke-width="0.9"></rect><path d="M6.4 5V7.3" stroke="#555" stroke-width="0.7"></path></svg>
<svg style="left:21px;top:512.3px" width="10" height="9" viewBox="0 0 10 9"><circle cx="3.8" cy="3.8" r="3.2" fill="none" stroke="#666" stroke-width="0.9"></circle><rect x="4" y="4" width="5" height="4.6" fill="#f8f8f8" stroke="#666" stroke-width="0.9"></rect><path d="M4 4H7V4.5C7 6 6 7 4.5 7H4Z" fill="#555"></path></svg>
<svg style="left:36px;top:511.8px" width="9" height="10" viewBox="0 0 9 10"><path d="M3 0.5C2 0.5 1.8 1 1.8 2V4C1.8 4.6 1.3 5 0.5 5C1.3 5 1.8 5.4 1.8 6V8C1.8 9 2 9.5 3 9.5M6 0.5C7 0.5 7.2 1 7.2 2V4C7.2 4.6 7.7 5 8.5 5C7.7 5 7.2 5.4 7.2 6V8C7.2 9 7 9.5 6 9.5" fill="none" stroke="#666" stroke-width="1"></path></svg>
<svg style="left:50px;top:512.3px" width="10" height="8" viewBox="0 0 10 8"><path d="M0.5 7.5C0.5 4 1.5 1 4 1C6.5 1 7 4 6.5 6.5L7 7.5Z" fill="#5e5e5e"></path><path d="M7.5 2.5C7.5 1.2 9.5 1.2 9.5 2.5C9.5 3.3 8.5 3.5 8.5 4.3" stroke="#777" stroke-width="0.8" fill="none"></path><circle cx="8.5" cy="5.5" r="0.5" fill="#777"></circle></svg>
<div class="f" style="left: 82px; top: 512.5px; font-size: 9.5px; color: rgb(102, 102, 102); width: 113.3px; transform: scaleX(0.9);">Время рендеринга кадра:</div>
<div class="f" style="left: 188px; top: 512.5px; font-size: 9.5px; color: rgb(62, 174, 140); width: 19.2px; transform: scaleX(0.885);">1 мс</div>
<svg style="left:475px;top:514.3px" width="7" height="3.5" viewBox="0 0 7 3.5"><path d="M0 3.5L2.2 1.2L3.2 2L4.6 0.2L7 3.5Z" fill="#666"></path></svg>
<div class="a" style="left:489px;top:516px;width:3.5px;height:1px;background:#bbb"></div>
<div class="a" style="left:496px;top:513px;width:8px;height:7.5px;border:1.6px solid #555;border-radius:50%"></div>
<div class="a" style="left:504px;top:516px;width:30px;height:1px;background:#c8c8c8"></div>
<svg style="left:538.5px;top:514px" width="12" height="5" viewBox="0 0 12 5"><path d="M0 5L2.5 2.2" stroke="#666" stroke-width="1"></path><path d="M2.5 5L6.5 0.3L12 5Z" fill="#666"></path></svg>
<div class="a" style="left:554px;top:508.5px;width:221px;height:14.5px;background:#d4d4d4"></div>

<!-- ===== RIGHT PANELS ===== -->
<div class="a" style="left:831px;top:65px;width:169px;height:42.5px;background:#f8f8f8"></div>
<div class="f" style="left: 841px; top: 70.4px; font-size: 9.5px; color: rgb(68, 68, 68); width: 64.4px; transform: scaleX(0.908);">Предпросмотр</div>
<div class="hm" style="left:908px;top:73px;width:6.5px"></div>
<svg style="left:867px;top:92.2px" width="86" height="6.8" viewBox="0 0 86 7.5" preserveAspectRatio="none"><rect x="0" y="0" width="1.6" height="7.5" fill="#666"></rect><path d="M2.5 3.75L10.5 0V7.5Z" fill="#666"></path>
<path d="M18 3.75L26 0V7.5Z" fill="#666"></path><rect x="26.5" y="0" width="1.6" height="7.5" fill="#666"></rect>
<path d="M38.5 0L46 3.75L38.5 7.5Z" fill="#666"></path>
<rect x="56" y="0" width="1.6" height="7.5" fill="#666"></rect><path d="M58.5 0L66.5 3.75L58.5 7.5Z" fill="#666"></path>
<path d="M75 0L83 3.75L75 7.5Z" fill="#666"></path><rect x="84" y="0" width="1.6" height="7.5" fill="#666"></rect></svg>
<div class="a" style="left:831px;top:111px;width:162px;height:37px;background:#f8f8f8"></div>
<div class="f" style="left: 841px; top: 115.9px; font-size: 9.5px; color: rgb(68, 68, 68); width: 132.2px; transform: scaleX(0.893);">Свойства: Ничего не выбрано</div>
<div class="hm" style="left:979px;top:118px;width:6px"></div>
<div class="a" style="left:993px;top:111px;width:7px;height:355px;background:#d5d5d5"></div>
<div class="a" style="left:993px;top:466px;width:7px;height:57px;background:#f2f2f2"></div>
<div class="a" style="left:831px;top:150px;width:162px;height:18px;background:#f8f8f8"></div>
<div class="f" style="left: 841px; top: 155.5px; font-size: 9px; color: rgb(85, 85, 85); width: 45.9px; transform: scaleX(0.936);">Выровнять</div>
<div class="a" style="left:831px;top:170px;width:162px;height:17.7px;background:#f8f8f8"></div>
<div class="a" style="left:992px;top:111px;width:1px;height:77px;background:#c6c6c6"></div>
<div class="a" style="left:991.5px;top:112px;width:1.5px;height:18px;background:#9a9a9a"></div>
<div class="f" style="left: 841px; top: 175.5px; font-size: 9px; color: rgb(85, 85, 85); width: 25.4px; transform: scaleX(0.965);">Аудио</div>
<div class="a" style="left:831px;top:190px;width:162px;height:333px;background:#f8f8f8;border:1px solid #a5c0e3;border-bottom:none"></div>
<div class="f" style="left: 841px; top: 194.6px; font-size: 9.5px; color: rgb(51, 51, 51); width: 94.7px; transform: scaleX(0.876);">Эффекты и шаблоны</div>
<div class="hm" style="left:979px;top:197px;width:6px"></div>
<div class="dd" style="left:835.5px;top:211.5px;width:153.5px;height:14px"></div>
<svg style="left:840px;top:214.5px" width="13" height="9" viewBox="0 0 13 9"><circle cx="3.6" cy="3.5" r="3.2" fill="none" stroke="#666" stroke-width="0.95"></circle><path d="M5.9 5.9L8.3 8.2" stroke="#666" stroke-width="1.1"></path><path d="M8.3 4.6L10.1 6.2L12 4.3" stroke="#666" stroke-width="1.1" fill="none"></path></svg>
<!-- EFFLIST -->
<div class="rowsep" style="left:832px;top:227.50px;width:160px"></div>
<svg style="left:835.5px;top:231.80px" width="5" height="7" viewBox="0 0 5 7"><path d="M0.8 0.7L4 3.5L0.8 6.3" stroke="#505050" stroke-width="1.35" fill="none"></path></svg>
<div class="f" style="left: 843.5px; top: 231.4px; font-size: 9px; color: rgb(74, 74, 74); width: 129.8px; transform: scaleX(0.961);">* Шаблоны настроек анимации</div>
<div class="rowsep" style="left:832px;top:240.76px;width:160px"></div>
<svg style="left:835.5px;top:245.06px" width="5" height="7" viewBox="0 0 5 7"><path d="M0.8 0.7L4 3.5L0.8 6.3" stroke="#505050" stroke-width="1.35" fill="none"></path></svg>
<div class="f" style="left: 843.5px; top: 244.66px; font-size: 9px; color: rgb(74, 74, 74); width: 64px; transform: scaleX(0.917);">Boris FX Mocha</div>
<div class="rowsep" style="left:832px;top:254.02px;width:160px"></div>
<svg style="left:835.5px;top:258.32px" width="5" height="7" viewBox="0 0 5 7"><path d="M0.8 0.7L4 3.5L0.8 6.3" stroke="#505050" stroke-width="1.35" fill="none"></path></svg>
<div class="f" style="left: 843.5px; top: 257.92px; font-size: 9px; color: rgb(74, 74, 74); width: 45px; transform: scaleX(0.928);">Cinema 4D</div>
<div class="rowsep" style="left:832px;top:267.28px;width:160px"></div>
<svg style="left:835.5px;top:271.58px" width="5" height="7" viewBox="0 0 5 7"><path d="M0.8 0.7L4 3.5L0.8 6.3" stroke="#505050" stroke-width="1.35" fill="none"></path></svg>
<div class="f" style="left: 843.5px; top: 271.18px; font-size: 9px; color: rgb(74, 74, 74); width: 36px; transform: scaleX(0.935);">Obsolete</div>
<div class="rowsep" style="left:832px;top:280.54px;width:160px"></div>
<svg style="left:835.5px;top:284.84px" width="5" height="7" viewBox="0 0 5 7"><path d="M0.8 0.7L4 3.5L0.8 6.3" stroke="#505050" stroke-width="1.35" fill="none"></path></svg>
<div class="f" style="left: 843.5px; top: 284.44px; font-size: 9px; color: rgb(74, 74, 74); width: 25.4px; transform: scaleX(0.961);">Аудио</div>
<div class="rowsep" style="left:832px;top:293.80px;width:160px"></div>
<svg style="left:835.5px;top:298.10px" width="5" height="7" viewBox="0 0 5 7"><path d="M0.8 0.7L4 3.5L0.8 6.3" stroke="#505050" stroke-width="1.35" fill="none"></path></svg>
<div class="f" style="left: 843.5px; top: 297.7px; font-size: 9px; color: rgb(74, 74, 74); width: 67px; transform: scaleX(0.951);">Видео с погруж.</div>
<div class="rowsep" style="left:832px;top:307.06px;width:160px"></div>
<svg style="left:835.5px;top:311.36px" width="5" height="7" viewBox="0 0 5 7"><path d="M0.8 0.7L4 3.5L0.8 6.3" stroke="#505050" stroke-width="1.35" fill="none"></path></svg>
<div class="f" style="left: 843.5px; top: 310.96px; font-size: 9px; color: rgb(74, 74, 74); width: 27.1px; transform: scaleX(0.934);">Время</div>
<div class="rowsep" style="left:832px;top:320.32px;width:160px"></div>
<svg style="left:835.5px;top:324.62px" width="5" height="7" viewBox="0 0 5 7"><path d="M0.8 0.7L4 3.5L0.8 6.3" stroke="#505050" stroke-width="1.35" fill="none"></path></svg>
<div class="f" style="left: 843.5px; top: 324.22px; font-size: 9px; color: rgb(74, 74, 74); width: 41.8px; transform: scaleX(0.97);">Имитация</div>
<div class="rowsep" style="left:832px;top:333.58px;width:160px"></div>
<svg style="left:835.5px;top:337.88px" width="5" height="7" viewBox="0 0 5 7"><path d="M0.8 0.7L4 3.5L0.8 6.3" stroke="#505050" stroke-width="1.35" fill="none"></path></svg>
<div class="f" style="left: 843.5px; top: 337.48px; font-size: 9px; color: rgb(74, 74, 74); width: 46.1px; transform: scaleX(0.967);">Искажение</div>
<div class="rowsep" style="left:832px;top:346.84px;width:160px"></div>
<svg style="left:835.5px;top:351.14px" width="5" height="7" viewBox="0 0 5 7"><path d="M0.8 0.7L4 3.5L0.8 6.3" stroke="#505050" stroke-width="1.35" fill="none"></path></svg>
<div class="f" style="left: 843.5px; top: 350.74px; font-size: 9px; color: rgb(74, 74, 74); width: 25.5px; transform: scaleX(0.922);">Канал</div>
<div class="rowsep" style="left:832px;top:360.10px;width:160px"></div>
<svg style="left:835.5px;top:364.40px" width="5" height="7" viewBox="0 0 5 7"><path d="M0.8 0.7L4 3.5L0.8 6.3" stroke="#505050" stroke-width="1.35" fill="none"></path></svg>
<div class="f" style="left: 843.5px; top: 364px; font-size: 9px; color: rgb(74, 74, 74); width: 39.5px; transform: scaleX(0.94);">Канал 3D</div>
<div class="rowsep" style="left:832px;top:373.36px;width:160px"></div>
<svg style="left:835.5px;top:377.66px" width="5" height="7" viewBox="0 0 5 7"><path d="M0.8 0.7L4 3.5L0.8 6.3" stroke="#505050" stroke-width="1.35" fill="none"></path></svg>
<div class="f" style="left: 843.5px; top: 377.26px; font-size: 9px; color: rgb(74, 74, 74); width: 70.3px; transform: scaleX(0.967);">Коррекция цвета</div>
<div class="rowsep" style="left:832px;top:386.62px;width:160px"></div>
<svg style="left:835.5px;top:390.92px" width="5" height="7" viewBox="0 0 5 7"><path d="M0.8 0.7L4 3.5L0.8 6.3" stroke="#505050" stroke-width="1.35" fill="none"></path></svg>
<div class="f" style="left: 843.5px; top: 390.52px; font-size: 9px; color: rgb(74, 74, 74); width: 35.8px; transform: scaleX(0.951);">Переход</div>
<div class="rowsep" style="left:832px;top:399.88px;width:160px"></div>
<svg style="left:835.5px;top:404.18px" width="5" height="7" viewBox="0 0 5 7"><path d="M0.8 0.7L4 3.5L0.8 6.3" stroke="#505050" stroke-width="1.35" fill="none"></path></svg>
<div class="f" style="left: 843.5px; top: 403.78px; font-size: 9px; color: rgb(74, 74, 74); width: 53.7px; transform: scaleX(0.949);">Перспектива</div>
<div class="rowsep" style="left:832px;top:413.14px;width:160px"></div>
<svg style="left:835.5px;top:417.44px" width="5" height="7" viewBox="0 0 5 7"><path d="M0.8 0.7L4 3.5L0.8 6.3" stroke="#505050" stroke-width="1.35" fill="none"></path></svg>
<div class="f" style="left: 843.5px; top: 417.04px; font-size: 9px; color: rgb(74, 74, 74); width: 42px; transform: scaleX(0.961);">Подложка</div>
<div class="rowsep" style="left:832px;top:426.40px;width:160px"></div>
<svg style="left:835.5px;top:430.70px" width="5" height="7" viewBox="0 0 5 7"><path d="M0.8 0.7L4 3.5L0.8 6.3" stroke="#505050" stroke-width="1.35" fill="none"></path></svg>
<div class="f" style="left: 843.5px; top: 430.3px; font-size: 9px; color: rgb(74, 74, 74); width: 47.2px; transform: scaleX(0.963);">Программа</div>
<div class="rowsep" style="left:832px;top:439.66px;width:160px"></div>
<svg style="left:835.5px;top:443.96px" width="5" height="7" viewBox="0 0 5 7"><path d="M0.8 0.7L4 3.5L0.8 6.3" stroke="#505050" stroke-width="1.35" fill="none"></path></svg>
<div class="f" style="left: 843.5px; top: 443.56px; font-size: 9px; color: rgb(74, 74, 74); width: 59.3px; transform: scaleX(0.942);">Прозр. налож.</div>
<div class="rowsep" style="left:832px;top:452.92px;width:160px"></div>
<svg style="left:835.5px;top:457.22px" width="5" height="7" viewBox="0 0 5 7"><path d="M0.8 0.7L4 3.5L0.8 6.3" stroke="#505050" stroke-width="1.35" fill="none"></path></svg>
<div class="f" style="left: 843.5px; top: 456.82px; font-size: 9px; color: rgb(74, 74, 74); width: 69.8px; transform: scaleX(0.935);">Разм. и резкость</div>
<div class="rowsep" style="left:832px;top:466.18px;width:160px"></div>
<svg style="left:835.5px;top:470.48px" width="5" height="7" viewBox="0 0 5 7"><path d="M0.8 0.7L4 3.5L0.8 6.3" stroke="#505050" stroke-width="1.35" fill="none"></path></svg>
<div class="f" style="left: 843.5px; top: 470.08px; font-size: 9px; color: rgb(74, 74, 74); width: 34.2px; transform: scaleX(0.912);">Создать</div>
<div class="rowsep" style="left:832px;top:479.44px;width:160px"></div>
<svg style="left:835.5px;top:483.74px" width="5" height="7" viewBox="0 0 5 7"><path d="M0.8 0.7L4 3.5L0.8 6.3" stroke="#505050" stroke-width="1.35" fill="none"></path></svg>
<div class="f" style="left: 843.5px; top: 483.34px; font-size: 9px; color: rgb(74, 74, 74); width: 50.1px; transform: scaleX(0.934);">Стилизация</div>
<div class="rowsep" style="left:832px;top:492.70px;width:160px"></div>
<svg style="left:835.5px;top:497.00px" width="5" height="7" viewBox="0 0 5 7"><path d="M0.8 0.7L4 3.5L0.8 6.3" stroke="#505050" stroke-width="1.35" fill="none"></path></svg>
<div class="f" style="left: 843.5px; top: 496.6px; font-size: 9px; color: rgb(74, 74, 74); width: 22.7px; transform: scaleX(0.939);">Текст</div>
<div class="rowsep" style="left:832px;top:505.96px;width:160px"></div>
<svg style="left:835.5px;top:510.26px" width="5" height="7" viewBox="0 0 5 7"><path d="M0.8 0.7L4 3.5L0.8 6.3" stroke="#505050" stroke-width="1.35" fill="none"></path></svg>
<div class="f" style="left: 843.5px; top: 509.86px; font-size: 9px; color: rgb(74, 74, 74); width: 50.7px; transform: scaleX(0.95);">Устаревший</div>
<div class="rowsep" style="left:832px;top:519.22px;width:160px"></div>
<!-- /EFFLIST -->

<div class="a" style="left:0;top:65px;width:1000px;height:1px;background:#e4e4e4"></div>


</body></html>
